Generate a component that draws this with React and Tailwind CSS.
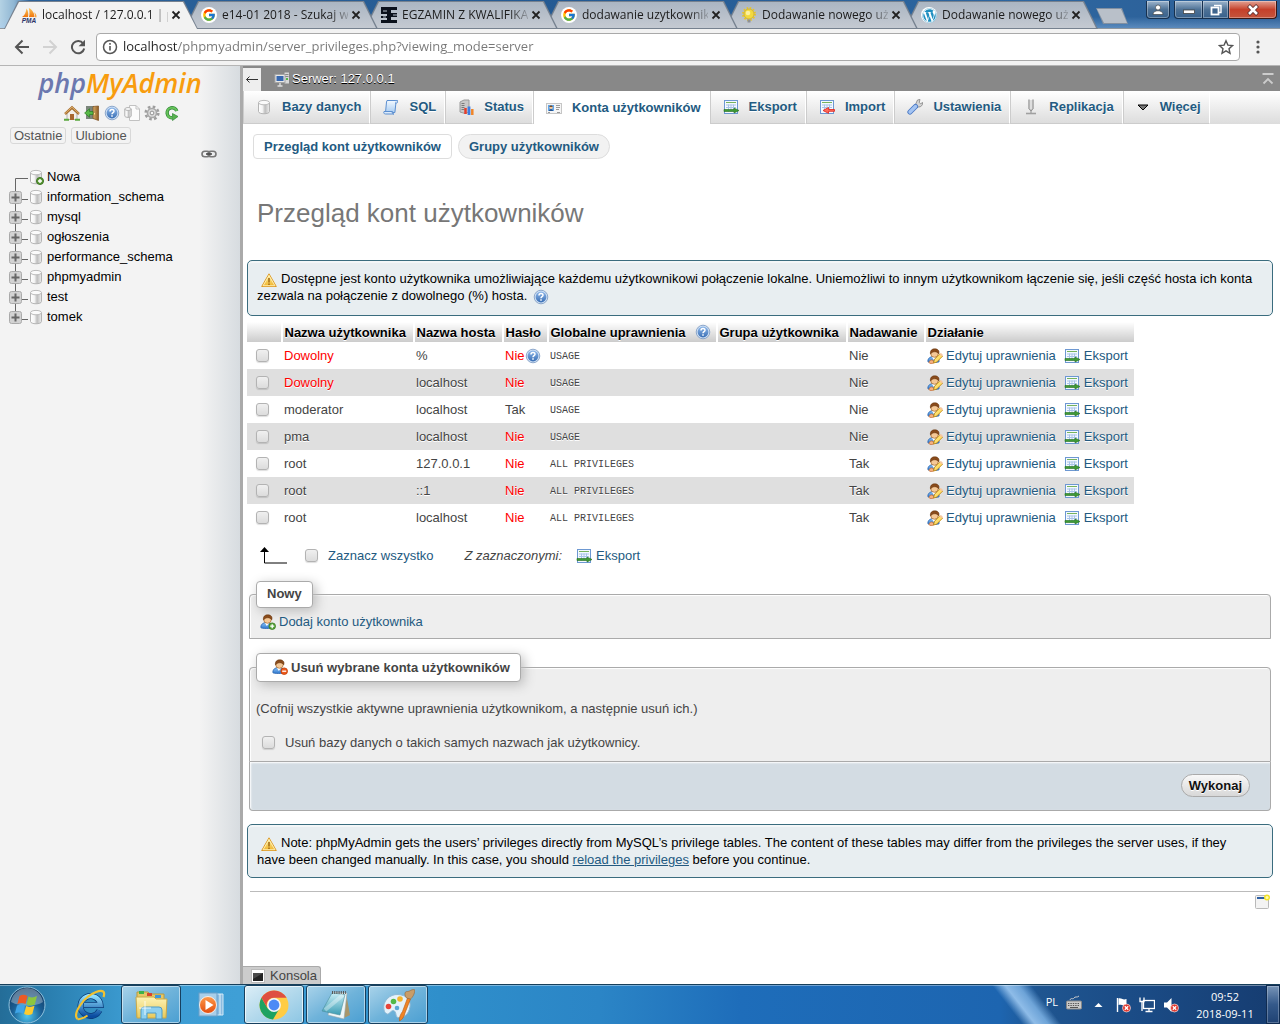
import React from "react";
import { FcGoogle } from "react-icons/fc";
import { FaWordpress } from "react-icons/fa";

const Svg = ({ s = 16, w, h, vb = "0 0 16 16", className = "shrink-0", children }) => (
  <svg width={w || s} height={h || s} viewBox={vb} className={className} aria-hidden="true" fill="none">
    {children}
  </svg>
);

function Gradients() {
  const g = (id, a, b, horizontal) => (
    <linearGradient id={id} x1="0" y1="0" x2={horizontal ? "1" : "0"} y2={horizontal ? "0" : "1"}>
      <stop offset="0" stopColor={a} />
      <stop offset="1" stopColor={b} />
    </linearGradient>
  );
  return (
    <svg className="absolute h-0 w-0" aria-hidden="true">
      <defs>
        <linearGradient id="silver" x1="0" x2="1" y1="0" y2="0">
          <stop offset="0" stopColor="#fff" />
          <stop offset=".35" stopColor="#f4f4f4" />
          <stop offset=".6" stopColor="#bdbdbd" />
          <stop offset="1" stopColor="#eee" />
        </linearGradient>
        {g("blue", "#8fb8ea", "#3a6fb5")}
        {g("shirt", "#8cc4f5", "#2f78d0")}
        {g("gold", "#fff3a0", "#efb32c")}
        {g("door", "#d9ae6b", "#8d5a22", true)}
        {g("page", "#f3f9ff", "#a9cdf2")}
        {g("flame", "#fbc45a", "#f0760c")}
        {g("folder", "#fdf3b5", "#e9c95a")}
        {g("pad", "#c8eef6", "#3b9db4")}
        {g("ie", "#8fe0ff", "#0a4ba0")}
        {g("orange", "#ff9a4a", "#e24d0e")}
        <radialGradient id="orb" cx=".5" cy=".8" r=".75">
          <stop offset="0" stopColor="#4fc6ee" />
          <stop offset=".55" stopColor="#1a5f95" />
          <stop offset="1" stopColor="#123a62" />
        </radialGradient>
      </defs>
    </svg>
  );
}

/* ---------- phpMyAdmin icons ---------- */
const DbShape = () => (
  <>
    <path d="M2.500 3.500v9c0 3 11 3 11 0v-9" fill="url(#silver)" stroke="#b4b4b4" />
    <ellipse cx="8" cy="3.600" rx="5.500" ry="2.200" fill="#fafafa" stroke="#bbb" />
  </>
);
const Db = () => <Svg><DbShape /></Svg>;
const DbNew = () => (
  <Svg>
    <DbShape />
    <circle cx="12" cy="12" r="3.500" fill="#5c9a38" stroke="#3d7420" />
    <path d="M12 10v4M10 12h4" stroke="#fff" strokeWidth="1.400" />
  </Svg>
);
const Sql = () => (
  <Svg>
    <path d="M4 1.500h10.500c-1.200.6-1.600 1.500-1.600 2.500l-1 9.500H2.500L3.500 3z" fill="url(#page)" stroke="#5c8fd0" />
    <path d="M12.900 1.500c2 0 2.300 2.500.6 2.500h-1.500M1 12.500h8.500c-.8 1.500.2 2.500 1.500 2.500H2.500C.8 15 .4 13.500 1 12.500z" fill="#dcebfb" stroke="#5c8fd0" />
  </Svg>
);
const Status = () => (
  <Svg>
    <path d="M2 3l4-2h5v12l-4 1.500L2 13z" fill="#c9c9c9" stroke="#9a9a9a" />
    <path d="M3.500 4.500h3M3.500 6.500h3M3.500 8.500h3M3.500 10.500h3" stroke="#7a7a7a" />
    <path d="M7.500 9v6" stroke="#e53d2b" strokeWidth="2.500" />
    <path d="M11 7.500V16" stroke="#3f7de0" strokeWidth="2.800" />
    <path d="M14.300 10v6" stroke="#f0862a" strokeWidth="2.500" />
  </Svg>
);
const Card = () => (
  <Svg>
    <rect x=".5" y="3.500" width="15" height="10" fill="#f5f5f5" stroke="#c6c6c6" />
    <rect x="2" y="5" width="6" height="6" fill="#62a5e8" />
    <path d="M3 11c0-2.500 4-2.500 4 0z" fill="#24538d" />
    <circle cx="5" cy="7.500" r="1.600" fill="#f3c79c" />
    <path d="M3.400 7c0-2 3.200-2 3.200 0z" fill="#7a4a1d" />
    <path d="M10 5.500h4M10 7.500h4M10 9.500h3M2 12.500h2M11 12.500h3" stroke="#9a9a9a" />
  </Svg>
);
const SheetBase = () => (
  <>
    <rect x="1.500" y="1.500" width="13" height="13" fill="#f4f9ff" stroke="#6d98d2" />
    <path d="M3 3.500h10" stroke="#76b35c" />
    <path d="M3 6h10M3 8.500h10M5.500 5.500v7M8 5.500v7M10.500 5.500v7" stroke="#a9c4e8" />
  </>
);
const Export = () => (
  <Svg>
    <SheetBase />
    <path d="M1 10.500h10V9l5 2.500-5 2.500v-1.500H1z" fill="#3f9a36" stroke="#236e1f" strokeWidth=".6" />
  </Svg>
);
const Import = () => (
  <Svg>
    <SheetBase />
    <path d="M15.500 10.500h-6v-2L4 11.500l5.500 2.800v-2h6z" fill="#ff6a5a" stroke="#e02018" strokeWidth=".8" />
  </Svg>
);
const Wrench = () => (
  <Svg>
    <path d="M8.500 5.500l2-4.500 2.500-.5-.8 3 1.500 1.200 2-1.200c.2 2.500-1.700 4.700-4.200 4.500L9.500 8.500z" fill="#d6d6d6" stroke="#8b8b8b" strokeWidth=".9" />
    <path d="M3 13L8.500 7.500" stroke="#4a78c4" strokeWidth="5.200" strokeLinecap="round" />
    <path d="M3 13L8.500 7.500" stroke="#a4c4f2" strokeWidth="3.400" strokeLinecap="round" />
  </Svg>
);
const Replication = () => (
  <Svg>
    <path d="M6 .5v9.500M10 .5v9.500" stroke="#a5a5a5" strokeWidth="1.600" />
    <path d="M8 1v11" stroke="#dedede" strokeWidth="2" />
    <path d="M6.500 10c0 2 3 2 3 0M8 11.500V14" stroke="#8c8c8c" />
    <path d="M3 14.500h10" stroke="#a0a0a0" strokeWidth="1.600" />
  </Svg>
);
const Down = () => (
  <Svg w={14} h={16} vb="1 0 14 16"><path d="M3 6h10l-5 5z" fill="#777" stroke="#000" /></Svg>
);
const ServerIcon = () => (
  <Svg>
    <rect x="10" y="1" width="5.500" height="12" fill="#d8d8d8" stroke="#858585" />
    <path d="M11 3.500h3.500M11 5.500h3.500" stroke="#888" />
    <rect x="1" y="3.500" width="10" height="8" fill="#e8e8e8" stroke="#a6a6a6" />
    <rect x="2.500" y="5" width="7" height="5" fill="#3768b0" />
    <path d="M6 12v2.500M3.500 15h5" stroke="#ddd" strokeWidth="1.400" />
    <rect x="12" y="7" width="2" height="2" fill="#55b948" />
  </Svg>
);
const Help = ({ className = "shrink-0" }) => (
  <Svg className={className}>
    <circle cx="8" cy="8" r="6.800" fill="#cfe0f4" stroke="#7797c0" strokeWidth=".8" />
    <circle cx="8" cy="8" r="5.400" fill="url(#blue)" />
    <path d="M6 6.500c0-2.700 4-2.700 4-.3C10 7.700 8 7.600 8 9.300M8 10.300v1.500" stroke="#fff" strokeWidth="1.500" />
  </Svg>
);
const Warn = () => (
  <Svg className="mx-1 mb-[-1px] inline-block align-[-4px]">
    <path d="M8 1.800L15.300 14.500H.7z" fill="url(#gold)" stroke="#dd9a28" strokeLinejoin="round" />
    <path d="M8 3.500L13.900 13.700H2.100z" stroke="#fff6c8" strokeWidth=".8" />
    <path d="M8 6v4.500M8 11.500v1.500" stroke="#a5701c" strokeWidth="1.600" />
  </Svg>
);
const Person = () => (
  <>
    <path d="M.8 13.500c0-3.500 2.500-5 5.700-5s5.700 1.500 5.700 5c0 1.300-11.400 1.300-11.400 0z" fill="url(#shirt)" stroke="#2863ad" strokeWidth=".8" />
    <path d="M5 9l1.800 3L9 9z" fill="#fff" />
    <circle cx="7.500" cy="5.500" r="3.800" fill="#f5c896" stroke="#a8682b" strokeWidth=".7" />
    <path d="M3.500 6C2.800 2.500 5 .8 7.800.8s5 1.700 4 5c-1.500-1.600-3-2.300-4.800-2C6 4 5 4.500 3.500 6z" fill="#8a4b1b" stroke="#5f300c" strokeWidth=".5" />
  </>
);
const UserEdit = () => (
  <Svg>
    <Person />
    <path d="M2 14.500c0-2 2-3 4-2.200l1 2.500c-1 1-5 1-5-.3z" fill="#f5b183" stroke="#c2672d" strokeWidth=".7" />
    <path d="M6.500 15l1-3.800L13 5.800l2.500 2.400-5.800 5.900z" fill="#ffdf6a" stroke="#c08a18" strokeWidth=".9" />
    <path d="M12.500 6.300L14 4.900l2 2.200-1.200 1.400z" fill="#f7c7a0" />
  </Svg>
);
const UserAdd = () => (
  <Svg>
    <Person />
    <circle cx="12.200" cy="12.200" r="3.300" fill="#5aa53c" stroke="#397a20" strokeWidth=".8" />
    <path d="M12.200 10.200v4M10.200 12.200h4" stroke="#fff" strokeWidth="1.300" />
  </Svg>
);
const UserDel = () => (
  <Svg>
    <Person />
    <circle cx="12.200" cy="12.200" r="3.300" fill="#ee5a1c" stroke="#bd3c08" strokeWidth=".8" />
    <path d="M10.200 12.200h4" stroke="#fff" strokeWidth="1.300" />
  </Svg>
);
const Home = () => (
  <Svg>
    <path d="M3 8v6.500h10V8L8 3.500z" fill="#f3efe8" stroke="#999" strokeWidth=".7" />
    <rect x="6" y="9" width="4" height="6" fill="#a8672f" />
    <path d="M1 9l7-6.500L15 9" stroke="#a9702f" strokeWidth="2.400" />
    <path d="M1 8.600l7-6.400 7 6.400" stroke="#dcae6c" strokeWidth="1" />
    <path d="M0 14.800h5M11 14.800h5" stroke="#5ba83f" strokeWidth="2" />
  </Svg>
);
const Exit = () => (
  <Svg>
    <rect x="2" y="1" width="8" height="13" fill="#7b857b" />
    <path d="M9 1.500L14.500 1v14.500L9 13.500z" fill="url(#door)" stroke="#7d4f1f" strokeWidth=".7" />
    <path d="M10.500 8v1.500" stroke="#ffe58b" />
    <path d="M9 6.500H5.500V3.800L.6 8l4.900 4.200V9.500H9z" fill="#58b947" stroke="#2b7d25" strokeWidth=".7" />
  </Svg>
);
const Doc = () => (
  <Svg>
    <path d="M5.500.5h6.500l3.500 3.500v11.500h-10z" fill="#fcfcfc" stroke="#c2c2c2" />
    <path d="M12 .5V4h3.500" stroke="#c2c2c2" />
    <path d="M.8 4v7c0 1.800 6.400 1.800 6.400 0V4" fill="url(#silver)" stroke="#b0b0b0" />
    <ellipse cx="4" cy="4" rx="3.200" ry="1.400" fill="#fff" stroke="#b0b0b0" />
  </Svg>
);
const Gear = () => (
  <Svg>
    <circle cx="8" cy="8" r="6.300" stroke="#9e9e9e" strokeWidth="2.600" strokeDasharray="2.600 2.340" />
    <circle cx="8" cy="8" r="4.500" fill="#dedede" stroke="#a8a8a8" strokeWidth="1.600" />
    <circle cx="8" cy="8" r="1.900" fill="#f5f5f5" stroke="#909090" />
  </Svg>
);
const Reload = () => (
  <Svg>
    <path d="M12.800 6A5 5 0 1 0 8 12.800" stroke="#2f8535" strokeWidth="3.400" />
    <path d="M12.800 6A5 5 0 1 0 8 12.800" stroke="#66c25a" strokeWidth="1.900" />
    <path d="M8.500 8.500L14 11.500 8.500 15.500z" fill="#57b34d" stroke="#2f8535" strokeWidth=".7" />
  </Svg>
);
const LinkIcon = () => (
  <Svg>
    <rect x="1" y="5.200" width="8" height="5.600" rx="2.800" stroke="#777" strokeWidth="1.600" />
    <rect x="7" y="5.200" width="8" height="5.600" rx="2.800" stroke="#777" strokeWidth="1.600" />
    <path d="M5 8h6" stroke="#444" strokeWidth="1.500" />
  </Svg>
);
const NewWindow = () => (
  <Svg>
    <rect x="1.500" y="1.500" width="13" height="13" rx="1" fill="#f3f3f3" stroke="#b9b9b9" />
    <path d="M3 4h8" stroke="#2b5fa4" strokeWidth="2" />
    <circle cx="13" cy="3.500" r="2.300" fill="#fffbb0" stroke="#f1e226" strokeWidth="1.400" />
  </Svg>
);
const ConsoleIcon = () => (
  <Svg>
    <rect x="1.500" y="1.500" width="13" height="13" fill="#fff" stroke="#bbb" />
    <path d="M3 5h10v8H3z" fill="#222" />
    <path d="M3 5h10L3 11z" fill="#4a4a4a" />
  </Svg>
);

/* ---------- favicons ---------- */
const PmaFav = () => (
  <Svg>
    <path d="M1 10C4 8.500 5 5 5.500 1.500 7.500 4 7.500 8 7 10z" fill="url(#flame)" />
    <path d="M8 10c.8-3 .5-6-.2-9C12 3 13.500 7 13.500 10z" fill="url(#flame)" />
    <path d="M14 10.200c.3-2-.2-3.700-1-5 2 1 2.700 3 2.500 5z" fill="#f6a23c" />
    <text x="8" y="15.800" textAnchor="middle" fontSize="6.500" fontWeight="bold" fontStyle="italic" fontFamily="Liberation Sans, sans-serif" fill="#2c3568">PMA</text>
  </Svg>
);
const GoogleFav = () => (
  <span className="flex h-4 w-4 shrink-0 items-center justify-center rounded-full bg-white"><FcGoogle size={14} /></span>
);
const EeFav = () => (
  <Svg>
    <path d="M0 0h16v3H10v3h6v4h-6v3h6v3H0v-3h6v-2H0V9h6V7H0z" fill="#0b111c" />
    <path d="M2 4h4M12 8h4M2 10h3" stroke="#b6bfca" />
  </Svg>
);
const BulbFav = () => (
  <Svg>
    <circle cx="8" cy="7" r="6" stroke="#e6c52c" strokeWidth="2" strokeDasharray="1.600 1.540" />
    <circle cx="8" cy="7" r="5" fill="#f2d93f" stroke="#cfae2a" strokeWidth=".8" />
    <circle cx="7" cy="6" r="2.300" fill="#fbf0a0" />
    <path d="M6.500 12.500h3v3h-3z" fill="#8f9195" />
  </Svg>
);
const WpFav = () => (
  <span className="flex h-4 w-4 shrink-0 items-center justify-center rounded-full bg-white"><FaWordpress size={15} color="#1f8fc0" /></span>
);

/* ---------- browser chrome ---------- */
const browserTabs = [
  { t: "localhost / 127.0.0.1 | p", Icon: PmaFav, z: "z-[6]", active: true },
  { t: "e14-01 2018 - Szukaj w", Icon: GoogleFav, z: "z-[5]" },
  { t: "EGZAMIN Z KWALIFIKA", Icon: EeFav, z: "z-[4]" },
  { t: "dodawanie uzytkownik", Icon: GoogleFav, z: "z-[3]" },
  { t: "Dodawanie nowego uż", Icon: BulbFav, z: "z-[2]" },
  { t: "Dodawanie nowego uż", Icon: WpFav, z: "z-[1]" },
];

function BrowserTab({ t, Icon, z, active, first }) {
  return (
    <div className={"relative h-7 w-[194px] min-w-0 " + z + (first ? "" : " -ml-[14px]")}>
      <span className="absolute inset-0 bg-[#76818f] [clip-path:polygon(14px_0,calc(100%-14px)_0,100%_100%,0_100%)]" />
      <span
        className={
          active
            ? "absolute inset-0 bg-[#f2f2f2] [clip-path:polygon(15px_1px,calc(100%-15px)_1px,calc(100%-1px)_100%,1px_100%)]"
            : "absolute inset-0 bg-gradient-to-b from-[#aab5c2] to-[#c5cad2] [clip-path:polygon(15px_1px,calc(100%-15px)_1px,calc(100%-2px)_27px,2px_27px)]"
        }
      />
      <div className="relative flex h-full items-center pr-[14px] pl-[17px]">
        <Icon />
        <span className="ml-[5px] min-w-0 flex-1 overflow-hidden text-[12px] whitespace-nowrap text-[#1c1c1c] [mask-image:linear-gradient(90deg,#000_85%,#0003)]">{t}</span>
        <button aria-label="Zamknij kartę" className="flex h-4 w-4 shrink-0 items-center justify-center">
          <Svg s={10} vb="0 0 10 10"><path d="M1.500 1.500l7 7M8.500 1.500l-7 7" stroke="#222" strokeWidth="1.800" /></Svg>
        </button>
      </div>
    </div>
  );
}

function TabStrip() {
  const btn = "flex items-center justify-center border-[#16304e] bg-gradient-to-b from-[#9fb6cd] via-[#4e7296] to-[#38618c] shadow-[inset_0_0_0_1px_#ffffff50]";
  return (
    <div className="flex h-[29px] shrink-0 items-start border-b border-[#8f979f] bg-[linear-gradient(180deg,transparent_60%,#a9cdf560),linear-gradient(90deg,#b4d2e4_0,#8fb6d3_14px,#2b6199_30px,#245a93_45%,#2d66a0_80%,#2d5f96)] pt-px pl-1 font-['Open_Sans',sans-serif]">
      {browserTabs.map((b, i) => <BrowserTab key={i} {...b} first={i === 0} />)}
      <button aria-label="Nowa karta" className="mt-[7px] -ml-[2px] h-4 w-8 shrink-0 bg-[#8290a1] [clip-path:polygon(0_0,26px_0,100%_100%,7px_100%)]">
        <span className="block h-full w-full bg-[#b9c0c9] [clip-path:polygon(1px_1px,25px_1px,31px_15px,8px_15px)]" />
      </button>
      <div className="ml-auto flex h-[18px] shrink-0 gap-1 pr-[3px]">
        <button aria-label="Użytkownik" className={btn + " w-6 rounded-b border border-t-0"}>
          <Svg s={12} vb="0 0 12 12"><circle cx="6" cy="3.500" r="2.500" fill="#fff" stroke="#333" strokeWidth=".6" /><path d="M1 10.500c0-5 10-5 10 0z" fill="#fff" stroke="#333" strokeWidth=".6" /></Svg>
        </button>
        <div className="flex">
          <button aria-label="Minimalizuj" className={btn + " w-[29px] rounded-bl border border-t-0"}>
            <Svg s={12} vb="0 0 12 12"><rect x=".5" y="6" width="11" height="3.500" fill="#fff" stroke="#444" strokeWidth=".8" /></Svg>
          </button>
          <button aria-label="Przywróć" className={btn + " w-[26px] border-r border-b"}>
            <Svg s={12} vb="0 0 12 12"><path d="M4 1.500h7v7H9" stroke="#fff" strokeWidth="1.400" /><rect x="1.500" y="3.500" width="7" height="7" fill="#3f658d" stroke="#fff" strokeWidth="1.800" /></Svg>
          </button>
          <button aria-label="Zamknij" className="flex w-[48px] items-center justify-center rounded-br border-r border-b border-[#3c1713] bg-gradient-to-b from-[#e0a093] via-[#c5402a] to-[#c4543c] shadow-[inset_0_0_0_1px_#ffffff50]">
            <Svg s={12} vb="0 0 12 12"><path d="M1.500 1.500l9 9M10.500 1.500l-9 9" stroke="#52282a" strokeWidth="4" /><path d="M2 2l8 8M10 2l-8 8" stroke="#fff" strokeWidth="2.600" /></Svg>
          </button>
        </div>
      </div>
    </div>
  );
}

function Toolbar() {
  return (
    <div className="flex h-[37px] shrink-0 items-center border-b border-[#b5b5b5] bg-[#f2f2f2] pr-[14px] pl-[14px]">
      <button aria-label="Wstecz" className="mr-3"><Svg><path d="M15 8H2.500M8.500 1.500L2 8l6.500 6.500" stroke="#555" strokeWidth="2" /></Svg></button>
      <button aria-label="Dalej" className="mr-3"><Svg><path d="M1 8h12.500M7.500 1.500L14 8l-6.500 6.500" stroke="#d2d2d2" strokeWidth="2" /></Svg></button>
      <button aria-label="Odśwież" className="mr-[10px]">
        <Svg><path d="M13.200 4.500A6.200 6.200 0 1 0 14.200 9.500" stroke="#555" strokeWidth="2" /><path d="M15 .8v6.400H8.600z" fill="#555" /></Svg>
      </button>
      <div className="flex h-7 min-w-0 flex-1 items-center rounded-sm border border-[#a9a9a9] bg-white px-[5px]">
        <Svg><circle cx="8" cy="8" r="6.500" stroke="#555" strokeWidth="1.500" /><path d="M8 7v4.500M8 4v1.700" stroke="#555" strokeWidth="1.600" /></Svg>
        <input
          aria-label="Adres"
          defaultValue="localhost/phpmyadmin/server_privileges.php?viewing_mode=server"
          className="ml-[5px] min-w-0 flex-1 bg-[linear-gradient(90deg,#222_55px,#777_55px)] bg-clip-text font-['Open_Sans',sans-serif] text-[13px] text-transparent outline-none"
        />
        <button aria-label="Dodaj zakładkę">
          <Svg><path d="M8 1.800l1.900 4.300 4.600.5-3.500 3.100 1 4.600L8 11.900l-4 2.400 1-4.600L1.500 6.600l4.600-.5z" stroke="#555" strokeWidth="1.400" /></Svg>
        </button>
      </div>
      <button aria-label="Menu" className="ml-[10px]">
        <Svg><circle cx="8" cy="3" r="1.600" fill="#555" /><circle cx="8" cy="8" r="1.600" fill="#555" /><circle cx="8" cy="13" r="1.600" fill="#555" /></Svg>
      </button>
    </div>
  );
}

/* ---------- sidebar ---------- */
const databases = ["information_schema", "mysql", "ogłoszenia", "performance_schema", "phpmyadmin", "test", "tomek"];

function Sidebar() {
  const chip = "h-[17px] rounded-[3px] border border-[#d8d8d8] px-[3px] text-[13px] leading-[15px] text-[#555]";
  return (
    <aside className="w-[243px] shrink-0 border-r-[3px] border-[#aaa] bg-[linear-gradient(90deg,#f3f3f3_200px,#d7dce0)]">
      <a href="#logo" className="mt-[1px] block h-[36px] text-center font-['Open_Sans',sans-serif] text-[27px] leading-[32px] font-semibold text-[#6c78af] italic">
        php<span className="text-[#f89c0e]">MyAdmin</span>
      </a>
      <div className="mt-[2px] ml-1 flex justify-center gap-1">
        {[["Start", Home], ["Wyloguj", Exit], ["Pomoc", Help], ["Dokumentacja", Doc], ["Ustawienia panelu", Gear], ["Odśwież panel", Reload]].map(([l, I]) => (
          <a key={l} href="#nav" aria-label={l}><I /></a>
        ))}
      </div>
      <div className="mt-[6px] ml-[10px] flex gap-[5px]">
        <button className={chip}>Ostatnie</button>
        <button className={chip}>Ulubione</button>
      </div>
      <div className="mt-[2px] mr-[23px] flex justify-end"><button aria-label="Połącz z panelem głównym"><LinkIcon /></button></div>
      <ul className="mt-[5px] ml-2 text-[13px] text-black">
        <li className="flex h-5 items-center">
          <Svg w={20} h={20} vb="0 0 20 20"><path d="M7.500 20v-8.500H20" stroke="#666" /></Svg>
          <DbNew />
          <a href="#new" className="ml-[3px]">Nowa</a>
        </li>
        {databases.map((d, i) => (
          <li key={d} className="flex h-5 items-center">
            <button aria-label={"Rozwiń " + d}>
              <Svg w={20} h={20} vb="0 0 20 20">
                <path d={i === databases.length - 1 ? "M7.500 0v10M14 12.500h7" : "M7.500 0v20M14 12.500h7"} stroke="#666" />
                <rect x="1.500" y="4.500" width="12" height="12" rx="2" fill="#d2d2d2" stroke="#aaa" />
                <path d="M7.500 6.500v8M3.500 10.500h8" stroke="#666" strokeWidth="2" />
              </Svg>
            </button>
            <Db />
            <a href={"#" + d} className="ml-[3px]">{d}</a>
          </li>
        ))}
      </ul>
    </aside>
  );
}

/* ---------- main panel ---------- */
const menu = [
  ["Bazy danych", Db], ["SQL", Sql], ["Status", Status], ["Konta użytkowników", Card], ["Eksport", Export],
  ["Import", Import], ["Ustawienia", Wrench], ["Replikacja", Replication], ["Więcej", Down],
];

const check = "block h-[13px] w-[13px] shrink-0 appearance-none rounded-[3px] border border-[#b3b3b3] bg-gradient-to-b from-[#f0f0f0] to-[#dcdcdc] shadow-[0_1px_1px_#0002]";

const users = [
  ["Dowolny", "%", "Nie", "USAGE", "Nie"],
  ["Dowolny", "localhost", "Nie", "USAGE", "Nie"],
  ["moderator", "localhost", "Tak", "USAGE", "Nie"],
  ["pma", "localhost", "Nie", "USAGE", "Nie"],
  ["root", "127.0.0.1", "Nie", "ALL PRIVILEGES", "Tak"],
  ["root", "::1", "Nie", "ALL PRIVILEGES", "Tak"],
  ["root", "localhost", "Nie", "ALL PRIVILEGES", "Tak"],
];

function UsersTable() {
  const th = "border-r border-white bg-gradient-to-b from-white to-[#ccc] p-0 pl-[3px] text-left font-bold text-black shadow-[inset_1px_0_#fff]";
  const td = "p-0 pl-[3px]";
  return (
    <table className="w-[887px] table-fixed border-collapse text-[13px] leading-[15px] text-[#444] [text-shadow:0_1px_0_#fff]">
      <colgroup>
        <col className="w-[34px]" /><col className="w-[132px]" /><col className="w-[89px]" /><col className="w-[45px]" />
        <col className="w-[169px]" /><col className="w-[130px]" /><col className="w-[78px]" /><col className="w-[210px]" />
      </colgroup>
      <thead>
        <tr className="h-5 whitespace-nowrap">
          <th className="border-r border-white bg-gradient-to-b from-white to-[#ccc] p-0" aria-label="Wybór" />
          <th className={th}>Nazwa użytkownika</th>
          <th className={th}>Nazwa hosta</th>
          <th className={th}>Hasło</th>
          <th className={th}>
            <span className="flex h-5 items-center justify-between pr-[5px]">Globalne uprawnienia <Help /></span>
          </th>
          <th className={th}>Grupa użytkownika</th>
          <th className={th}>Nadawanie</th>
          <th className={th}>Działanie</th>
        </tr>
      </thead>
      <tbody>
        {users.map(([name, host, pass, priv, grant], i) => (
          <tr key={i} className={i % 2 ? "h-[27px] bg-[#dfdfdf]" : "h-[27px]"}>
            <td className="p-0 pl-[9px]"><input type="checkbox" id={"user" + i} className={check} /></td>
            <td className={td}><label htmlFor={"user" + i} className={name === "Dowolny" ? "text-[#f00]" : ""}>{name}</label></td>
            <td className={td}>{host}</td>
            <td className={td}>
              <span className={"flex items-center whitespace-nowrap" + (pass === "Nie" ? " text-[#f00]" : "")}>{pass}{i === 0 && <Help />}</span>
            </td>
            <td className={td}><code className="font-['Liberation_Mono',monospace] text-[10px]">{priv}</code></td>
            <td className={td} />
            <td className={td}>{grant}</td>
            <td className="p-0 pl-[3px]">
              <div className="flex items-center text-[#235a81]">
                <a href="#edit" className="flex items-center gap-[3px]"><UserEdit />Edytuj uprawnienia</a>
                <a href="#export" className="ml-2 flex items-center gap-1"><Export />Eksport</a>
              </div>
            </td>
          </tr>
        ))}
      </tbody>
    </table>
  );
}

function Main() {
  const notice = "mr-[7px] ml-1 rounded-[5px] border border-[#3a6c7e] bg-[#e8eef1] pt-[9px] pr-[17px] pl-[9px] text-[13px] leading-[17px] text-black shadow-[inset_0_2px_1px_#fff8]";
  const legend = "flex items-center rounded-sm border border-[#aaa] bg-white text-[13px] font-bold text-[#444] shadow-[3px_3px_12px_#bbb] [text-shadow:0_1px_0_#fff]";
  return (
    <main className="relative min-w-0 flex-1 overflow-hidden bg-white font-['Liberation_Sans',Arial,sans-serif]">
      <div className="flex h-[25px] items-center bg-[#888] text-[13px] text-white">
        <button aria-label="Ukryj panel" className="mt-px flex h-[23px] w-[18px] items-center justify-center bg-[#eee]">
          <Svg s={14} vb="0 0 14 14"><path d="M13 7.500H1.500M4.500 4.500l-3 3 3 3" stroke="#333" /></Svg>
        </button>
        <a href="#server" className="ml-[13px] flex items-center gap-[2px] [text-shadow:0_1px_0_#000]"><ServerIcon />Serwer: 127.0.0.1</a>
        <button aria-label="Do góry" className="mr-1 ml-auto">
          <Svg><path d="M2.500 3h11M3.500 12.500L8 8l4.500 4.500" stroke="#ccc" strokeWidth="1.800" /></Svg>
        </button>
      </div>
      <nav className="flex h-[33px] bg-gradient-to-b from-white to-[#dcdcdc]">
        {menu.map(([label, I]) => (
          <a
            key={label}
            href={"#" + label}
            className={
              "flex items-center gap-[10px] border-r border-l border-r-white border-l-[#ccc] pr-2 pl-3 text-[13px] font-bold whitespace-nowrap text-[#235a81] [text-shadow:0_1px_0_#fff] " +
              (label === "Konta użytkowników" ? "bg-white" : "border-b border-b-[#ccc]")
            }
          >
            <I />{label}
          </a>
        ))}
      </nav>
      <div className="mt-[10px] ml-[10px] flex gap-[6px] text-[13px] font-bold text-[#235a81]">
        <a href="#overview" className="flex h-[25px] items-center rounded border border-[#ddd] px-[10px]">Przegląd kont użytkowników</a>
        <a href="#groups" className="flex h-[25px] items-center rounded-full border border-[#ddd] bg-[#f2f2f2] px-[10px]">Grupy użytkowników</a>
      </div>
      <h2 className="mt-[38px] mb-[31px] ml-[14px] text-[26px] leading-8 text-[#777] [text-shadow:0_1px_0_#fff]">Przegląd kont użytkowników</h2>
      <div className={notice + " pb-[11px]"}>
        <Warn />Dostępne jest konto użytkownika umożliwiające każdemu użytkownikowi połączenie lokalne. Uniemożliwi to innym użytkownikom łączenie się, jeśli część hosta ich konta zezwala na połączenie z dowolnego (%) hosta. <Help className="mb-[-1px] ml-[2px] inline-block align-[-4px]" />
      </div>
      <div className="mt-[6px] ml-1"><UsersTable /></div>
      <div className="mt-[15px] ml-4 flex items-center text-[13px] text-[#235a81]">
        <Svg w={30} h={18} vb="0 0 30 18"><path d="M5.500 4v12H28" stroke="#000" /><path d="M5.500 0L10 5H1z" fill="#000" /></Svg>
        <input type="checkbox" id="all" className={check + " ml-4"} />
        <label htmlFor="all" className="ml-[10px]">Zaznacz wszystko</label>
        <i className="ml-[31px] text-[#444]">Z zaznaczonymi:</i>
        <button className="ml-[14px] flex items-center gap-1"><Export />Eksport</button>
      </div>
      <fieldset className="mt-[15px] mr-[9px] ml-[6px] rounded-t border border-[#aaa] bg-[#eee] px-[6px] shadow-[inset_1px_1px_1px_#fff]">
        <legend className={legend + " h-[27px] px-[10px]"}>Nowy</legend>
        <a href="#add" className="mt-[6px] mb-[8px] ml-1 flex w-fit items-center gap-[3px] text-[13px] leading-4 text-[#235a81]"><UserAdd />Dodaj konto użytkownika</a>
      </fieldset>
      <fieldset className="mt-[14px] mr-[9px] ml-[6px] rounded-t border border-[#aaa] bg-[#eee] px-[6px] text-[13px] leading-[17px] text-[#444] shadow-[inset_1px_1px_1px_#fff]">
        <legend className={legend + " h-[29px] gap-[3px] pr-[10px] pl-[15px]"}><UserDel />Usuń wybrane konta użytkowników</legend>
        <p className="mt-[18px]">(Cofnij wszystkie aktywne uprawnienia użytkownikom, a następnie usuń ich.)</p>
        <div className="mt-[17px] mb-[10px] ml-[6px] flex items-center gap-[10px]">
          <input type="checkbox" id="drop" className={check} />
          <label htmlFor="drop">Usuń bazy danych o takich samych nazwach jak użytkownicy.</label>
        </div>
      </fieldset>
      <div className="mr-[9px] ml-[6px] flex h-[49px] items-center justify-end rounded-b border border-t-0 border-[#aaa] bg-[#d3dce3] pr-5 shadow-[inset_1px_1px_2px_#fff]">
        <button className="h-[23px] rounded-full border border-[#aaa] bg-gradient-to-b from-[#f8f8f8] to-[#d8d8d8] px-[7px] text-[13px] leading-[21px] font-bold text-[#111] [text-shadow:0_1px_0_#fff]">Wykonaj</button>
      </div>
      <div className={notice + " mt-[13px] pb-[9px]"}>
        <Warn />Note: phpMyAdmin gets the users’ privileges directly from MySQL’s privilege tables. The content of these tables may differ from the privileges the server uses, if they have been changed manually. In this case, you should <a href="#reload" className="text-[#235a81] underline">reload the privileges</a> before you continue.
      </div>
      <hr className="mt-[13px] mr-[10px] ml-[7px] border-[#bbb]" />
      <div className="mt-[2px] mr-[10px] flex justify-end"><a href="#window" aria-label="Otwórz nowe okno"><NewWindow /></a></div>
      <button className="absolute bottom-0 left-0 flex h-[18px] items-center gap-1 rounded-tr-[3px] border border-b-0 border-l-0 border-[#aaa] bg-[#ccc] pr-[3px] pl-[7px] text-[13px] text-[#444]">
        <ConsoleIcon />Konsola
      </button>
    </main>
  );
}

/* ---------- taskbar ---------- */
const Orb = () => (
  <Svg s={38} vb="0 0 38 38">
    <circle cx="19" cy="19" r="18" fill="url(#orb)" stroke="#8fc2dd" strokeWidth="1" />
    <path d="M3 16C5 5 14 2 19 2s14 3 16 14c-8 5-22 5-32 0z" fill="#fff" opacity=".32" />
    <path d="M11.500 10c3-1.700 5-1.400 8 0l-2 8c-2.600-1.300-5-1.300-8.200 0z" fill="#ee5a24" />
    <path d="M20.500 10.500c2.700 1.300 5.300 1.200 8.500-.5l-2.200 8.400c-2.600 1.300-5.300 1.300-8.300 0z" fill="#8cc63f" />
    <path d="M9 19.400c3-1.400 5.200-1.300 8.100 0L15 27.500c-2.600-1.300-5.300-1.300-8.100 0z" fill="#3fa4e8" />
    <path d="M18.200 20c2.700 1.300 5.300 1.200 8.300-.2l-2.200 8.200c-2.800 1.300-5.300 1.200-8.200 0z" fill="#fdcb2e" />
  </Svg>
);
const Ie = () => (
  <Svg s={32} vb="0 0 32 32">
    <path d="M25.500 21.500A10 10 0 1 1 26.500 16H10" stroke="#083a78" strokeWidth="6" />
    <path d="M25.500 21.500A10 10 0 1 1 26.500 16.010H10" stroke="url(#ie)" strokeWidth="4.600" />
    <path d="M3.500 30C-1.500 25 9 8 22 3c7-2.500 9.500-.5 7.500 5" stroke="#f2c230" strokeWidth="2.200" />
    <path d="M3.500 30c3 .8 7-1.500 10-3.500" stroke="#f2c230" strokeWidth="2" />
  </Svg>
);
const Explorer = () => (
  <Svg w={34} h={32} vb="0 0 34 32">
    <path d="M3 3h11l2 2h14v23H3z" fill="#e6c766" stroke="#b99a3d" />
    <rect x="5" y="2" width="5" height="3" fill="#3bb24a" /><rect x="13" y="4" width="5" height="3" fill="#d8432f" /><rect x="21" y="6" width="6" height="3" fill="#3d98dd" />
    <path d="M2 8h18l2 2h11l-1 19H3z" fill="url(#folder)" stroke="#c8a84a" />
    <path d="M7 30v-9q0-3 3-3h15q3 0 3 3v9h-6v-6H13v6z" fill="#8ed0f0" stroke="#4d9cc9" />
    <path d="M11 12v14M5 19h12" stroke="#fff" opacity=".8" />
  </Svg>
);
const Wmp = () => (
  <Svg s={28} vb="0 0 28 28">
    <path d="M8 3h18v21H8z" fill="#8abbe0" stroke="#d3e9f7" /><path d="M23 3v21" stroke="#e7f4fb" />
    <rect x="2" y="2" width="18" height="23" fill="#a9cfe9" stroke="#6aa0c8" />
    <circle cx="11" cy="14" r="8.500" fill="url(#orange)" stroke="#fff" strokeWidth=".8" />
    <path d="M8.500 9l8 5-8 5z" fill="#fff" />
  </Svg>
);
const Chrome = () => (
  <Svg s={30} vb="0 0 30 30">
    <circle cx="15" cy="15" r="14.500" fill="#fc4" />
    <path d="M15 15L8.700 18.600 2.500 7.700A14.500 14.500 0 0 0 14 29.500l6.300-10.800z" fill="#1da261" />
    <path d="M2.500 7.700A14.500 14.500 0 0 1 27.600 7.800H15a7.200 7.200 0 0 0-6.300 10.800z" fill="#de4f41" />
    <circle cx="15" cy="15" r="6.900" fill="#f4f6f8" /><circle cx="15" cy="15" r="5.400" fill="#4c8bf5" />
  </Svg>
);
const Notepad = () => (
  <Svg s={32} vb="0 0 32 32">
    <path d="M26 4l4 22-6 3z" fill="#a8966a" />
    <path d="M13 3l14 1-3 26-16-4z" fill="#eef6f7" stroke="#99a8aa" strokeWidth=".6" />
    <path d="M12 4l13 1.500-5 20.500L2 22z" fill="url(#pad)" stroke="#4b8d9c" strokeWidth=".6" />
    <path d="M12 3.500h14" stroke="#555" strokeWidth="3" strokeDasharray="1 1.200" />
    <path d="M5 21L23 6" stroke="#fff" opacity=".35" strokeWidth="4" />
  </Svg>
);
const Paint = () => (
  <Svg s={34} vb="0 0 34 34">
    <path d="M3 22C1 13 9 6 17 6.500c8 .5 13 5 12 12-1 8-7 12-12 11-3-.6-1-4-3.500-6.500S8 27 6 26c-1.500-.8-2.500-2-3-4z" fill="#e4f2fb" stroke="#8fb9d5" />
    <circle cx="7.500" cy="18.500" r="2.800" fill="#e8443a" /><circle cx="12.500" cy="13.500" r="2.800" fill="#52b848" /><circle cx="19" cy="11" r="2.800" fill="#f5b62e" /><circle cx="16" cy="20" r="2.300" fill="#5aa7d6" />
    <path d="M18.500 33c-.5-4 1-6.500 3-9.500l5-13.500 3 1-5.500 14c-1 4-2.500 6.500-5.500 8z" fill="#ef8425" stroke="#b75b14" strokeWidth=".6" />
    <path d="M25.500 10c-2.500-3-2-7 1-6.500C29 3.500 31 .5 34 2c-.5 4-2 7-4.500 9z" fill="#c99d68" stroke="#94683a" strokeWidth=".6" />
  </Svg>
);
const Cross = ({ x, y }) => (
  <>
    <circle cx={x} cy={y} r="4" fill="#e0362c" stroke="#fff" strokeWidth=".6" />
    <path d={`M${x - 1.7} ${y - 1.7}l3.400 3.400M${x + 1.7} ${y - 1.7}l-3.400 3.400`} stroke="#fff" strokeWidth="1.300" />
  </>
);

function Taskbar() {
  const open = "flex h-[39px] w-[60px] items-center justify-center rounded-[3px] border border-[#17405f] bg-gradient-to-br from-[#a9d3ea] via-[#6fb3da] to-[#4a9fd2] shadow-[inset_0_0_0_1px_#ffffff80]";
  return (
    <footer className="flex h-10 shrink-0 items-center border-t border-[#173f5a] bg-[linear-gradient(52deg,transparent_78%,#8ebce8_79%,#6ea4d8_80%,transparent_81%),linear-gradient(90deg,#246d98_0,#2a7fb0_50px,#3c9cd2_130px,#3f9fd6_240px,#2f8fcb_440px,#2b85c6_600px,#1e6dba_740px,#1d65b0_1000px,#1f5590_1040px,#1a4a84_1150px,#163c70)] shadow-[inset_0_1px_#ffffff60]">
      <button aria-label="Start" className="ml-2"><Orb /></button>
      <button aria-label="Internet Explorer" className="mr-[15px] ml-7"><Ie /></button>
      <button aria-label="Eksplorator Windows" className={open}><Explorer /></button>
      <button aria-label="Windows Media Player" className="mr-[19px] ml-4"><Wmp /></button>
      <div className="flex gap-[2px]">
        <button aria-label="Google Chrome" className="flex h-[39px] w-[60px] items-center justify-center rounded-[3px] border border-[#17405f] bg-gradient-to-br from-[#dceef7] via-[#b3d9ec] to-[#8cc6e4] shadow-[inset_0_0_0_1px_#ffffffb0]"><Chrome /></button>
        <button aria-label="Notatnik" className={open}><Notepad /></button>
        <button aria-label="Paint" className={open}><Paint /></button>
      </div>
      <div className="ml-auto flex h-full items-center font-['Open_Sans',sans-serif] text-[11px] text-white">
        <span className="mr-2 mb-1">PL</span>
        <button aria-label="Klawiatura" className="mb-1 mr-3">
          <Svg><path d="M4 5c1-3 3 0 4-2s3 0 5-2" stroke="#ccc" /><rect x=".5" y="6" width="15" height="8" rx="1" fill="#c9c9c9" stroke="#888" /><path d="M2 8.500h12M2 10.500h12" stroke="#555" strokeDasharray="1.400 1" /><path d="M4 12.500h8" stroke="#555" /></Svg>
        </button>
        <button aria-label="Pokaż ukryte ikony" className="mr-3"><Svg s={9} vb="0 0 9 9"><path d="M.5 7L4.500 3l4 4z" fill="#fff" /></Svg></button>
        <button aria-label="Centrum akcji" className="mr-2"><Svg><path d="M2.500 1v14" stroke="#fff" strokeWidth="1.400" /><path d="M3.500 1.500c3-1 4 2 8 .5V8c-4 1.500-5-1-8 0z" fill="#fff" /><Cross x={11.500} y={11} /></Svg></button>
        <button aria-label="Sieć" className="mr-2"><Svg><rect x="4.500" y="3.500" width="11" height="8" fill="#1d4a80" stroke="#fff" strokeWidth="1.300" /><path d="M10 12v2.500M6.500 14.500h7" stroke="#fff" strokeWidth="1.300" /><path d="M1 .5v4h4v-4M3 4.500V14" stroke="#fff" strokeWidth="1.300" /></Svg></button>
        <button aria-label="Głośność"><Svg><path d="M1 5.500h3L8.500 1v14L4 10.500H1z" fill="#fff" /><Cross x={11.500} y={11} /></Svg></button>
        <div className="mr-[11px] ml-4 w-[60px] text-center leading-[17px] whitespace-nowrap">09:52<br />2018-09-11</div>
        <button aria-label="Pokaż pulpit" className="h-full w-[14px] border border-[#0f2b50] bg-gradient-to-b from-[#7895b8] via-[#34598a] to-[#1f4273] shadow-[inset_0_0_0_1px_#ffffff40]" />
      </div>
    </footer>
  );
}

export default function App() {
  return (
    <div className="flex h-screen flex-col overflow-hidden font-['Liberation_Sans',Arial,sans-serif]">
      <Gradients />
      <TabStrip />
      <Toolbar />
      <div className="flex min-h-0 flex-1">
        <Sidebar />
        <Main />
      </div>
      <Taskbar />
    </div>
  );
}
